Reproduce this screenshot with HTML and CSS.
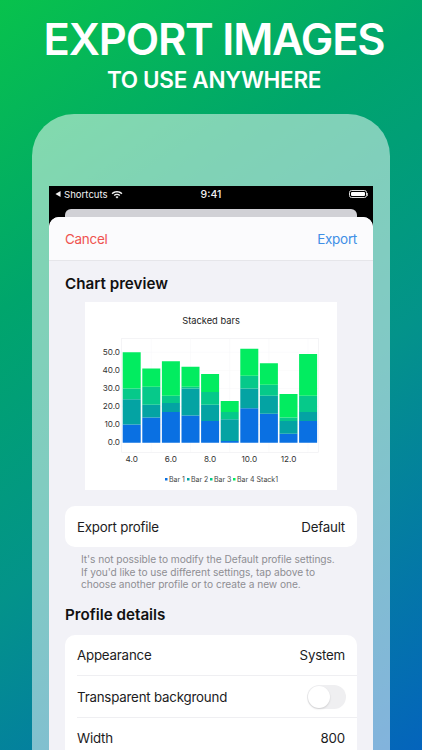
FILE: index.html
```html
<!DOCTYPE html>
<html lang="en">
<head>
<meta charset="utf-8">
<title>Export images</title>
<link rel="stylesheet" href="styles.css">
</head>
<body>
<main class="page">
  <header class="hero">
    <h1 class="hero-title">EXPORT IMAGES</h1>
    <p class="hero-sub">TO USE ANYWHERE</p>
  </header>
  <section class="phone">
    <div class="screen">
      <div class="status">
        <div class="status-left">
          <svg class="back-tri" viewBox="0 0 6 7"><path d="M0 3.5 6 0v7z"/></svg>
          <span>Shortcuts</span>
          <svg class="wifi" viewBox="0 0 12 9"><path d="M6 1C3.9 1 2 1.8.6 3.2l1 1C2.8 3 4.3 2.4 6 2.4s3.2.6 4.4 1.8l1-1C10 1.8 8.1 1 6 1z"/><path d="M6 3.7c-1.300 0-2.400.5-3.300 1.300l1 1C4.300 5.400 5.100 5.100 6 5.100s1.700.3 2.300.9l1-1C8.400 4.200 7.300 3.700 6 3.700z"/><path d="M6 6.300c-.6 0-1.100.2-1.500.6L6 8.500l1.500-1.600c-.4-.4-.9-.6-1.500-.6z"/></svg>
        </div>
        <div class="status-time">9:41</div>
        <div class="status-right">
          <span class="battery"><span class="battery-fill"></span></span>
          <span class="battery-cap"></span>
        </div>
      </div>
      <div class="back-card"></div>
      <div class="sheet">
        <nav class="sheet-nav">
          <span class="cancel">Cancel</span>
          <span class="export">Export</span>
        </nav>
        <div class="sheet-body">
          <h2 class="section-title">Chart preview</h2>
          <figure class="chart">
            <svg class="chart-svg" viewBox="0 0 252 188">
              <rect class="plot" x="36.700" y="36.300" width="196.600" height="114"/>
              <path class="grid" d="M66.300 36.300V150.300M105.500 36.300V150.300M144.700 36.300V150.300M183.900 36.300V150.300M223.100 36.300V150.300M36.700 50.300H233.300M36.700 68.400H233.300M36.700 86.500H233.300M36.700 104.500H233.300M36.700 122.600H233.300"/>
              <path class="s1" d="M37.700 140.700V122.600h18v18.100zM57.300 140.700V115.400h18v25.300zM76.900 140.700V110h18v30.700zM96.500 140.700V113.600h18v27.100zM116.100 140.700V119h18v21.700zM135.700 140.700V138.900h18v1.800zM155.300 140.700V106.300h18v34.400zM174.900 140.700V111.800h18v28.900zM194.500 140.700V131.700h18v9zM214.100 140.700V119h18v21.700z"/>
              <path class="s2" d="M37.700 122.600V97.300h18v25.300zM57.300 115.400V102.700h18v12.700zM76.900 110V100.900h18v9.100zM96.500 113.600V86.500h18v27.100zM116.100 119V102.700h18v16.300zM135.700 138.900V117.200h18v21.700zM155.300 106.300V86.500h18v19.800zM174.900 111.800V93.700h18v18.100zM194.500 131.700V119h18v12.700zM214.100 119V110h18v9z"/>
              <path class="s3" d="M37.700 97.300V86.500h18v10.800zM57.300 102.700V84.700h18v18zM76.900 100.900V93.700h18v7.200zM96.500 86.500V84.700h18v1.800zM116.100 102.700V90.100h18v12.600zM135.700 117.200V110h18v7.200zM155.300 86.500V73.800h18v12.700zM174.900 93.700V82.800h18v10.900zM194.500 119V115.400h18v3.600zM214.100 110V93.700h18v16.300z"/>
              <path class="s4" d="M37.700 86.500V50.300h18v36.200zM57.300 84.700V66.600h18v18.100zM76.900 93.700V59.300h18v34.400zM96.500 84.700V64.800h18v19.900zM116.100 90.100V72h18v18.100zM135.700 110V99.100h18v10.900zM155.300 73.800V46.700h18v27.100zM174.900 82.800V61.200h18v21.600zM194.500 115.400V91.900h18v23.500zM214.100 93.700V52.100h18v41.600z"/>
              <text class="chart-title" x="126" y="22">Stacked bars</text>
              <g class="y-labels">
                <text x="35" y="53.300">50.0</text>
                <text x="35" y="71.300">40.0</text>
                <text x="35" y="89.300">30.0</text>
                <text x="35" y="107">20.0</text>
                <text x="35" y="125">10.0</text>
                <text x="35" y="142.800">0.0</text>
              </g>
              <g class="x-labels">
                <text x="46.700" y="159.600">4.0</text>
                <text x="85.900" y="159.600">6.0</text>
                <text x="125.100" y="159.600">8.0</text>
                <text x="164.300" y="159.600">10.0</text>
                <text x="203.500" y="159.600">12.0</text>
              </g>
              <rect class="s1" x="80" y="176" width="2.500" height="2.500"/>
              <text class="legend" x="84" y="179.500">Bar 1</text>
              <rect class="s2" x="102" y="176" width="2.500" height="2.500"/>
              <text class="legend" x="106" y="179.500">Bar 2</text>
              <rect class="s3" x="125" y="176" width="2.500" height="2.500"/>
              <text class="legend" x="129" y="179.500">Bar 3</text>
              <rect class="s4" x="148" y="176" width="2.500" height="2.500"/>
              <text class="legend" x="152" y="179.500">Bar 4 Stack1</text>
            </svg>
          </figure>
          <div class="card">
            <div class="row"><span>Export profile</span><span>Default</span></div>
          </div>
          <p class="note">It's not possible to modify the Default profile settings.<br>If you'd like to use different settings, tap above to<br>choose another profile or to create a new one.</p>
          <h2 class="section-title details-title">Profile details</h2>
          <div class="card">
            <div class="row row-line"><span>Appearance</span><span>System</span></div>
            <div class="row row-line"><span>Transparent background</span><span class="switch"><span class="knob"></span></span></div>
            <div class="row"><span>Width</span><span>800</span></div>
          </div>
        </div>
      </div>
    </div>
  </section>
</main>
</body>
</html>
```
FILE: styles.css
```css
* { box-sizing: border-box; }
html, body { margin: 0; padding: 0; }
body { width: 422px; height: 750px; overflow: hidden; font-family: Inter, "Liberation Sans", sans-serif; }
.page {
  width: 422px; height: 750px; overflow: hidden;
  background: linear-gradient(146deg, #08c24c 0%, #00a56c 30%, #03938a 58%, #0464bc 100%);
  display: flex; flex-direction: column; align-items: center;
}
.hero { text-align: center; color: #fff; padding: 15px 0 0 6px; height: 114px; flex: none; }
.hero-title { margin: 0; font-size: 43.500px; font-weight: 600; line-height: 49px; letter-spacing: -1.200px; white-space: nowrap; }
.hero-sub { margin: 3px 0 0; font-size: 22.500px; font-weight: 600; line-height: 26px; letter-spacing: -0.300px; white-space: nowrap; }
.phone {
  flex: none; width: 358px; height: 636px; padding: 72px 17px 0;
  background: rgba(255, 255, 255, 0.5);
  border-radius: 42px 42px 0 0;
}
.screen { background: #000; height: 564px; overflow: hidden; }
.status { height: 23px; display: flex; align-items: center; justify-content: space-between; color: #f2f2f2; font-size: 9.600px; padding: 0 5px 7px 6px; position: relative; }
.status-left { display: flex; align-items: center; gap: 3px; }
.back-tri { width: 6px; height: 6px; fill: #f2f2f2; }
.wifi { width: 12px; height: 9px; fill: #f2f2f2; }
.status-time { position: absolute; left: 0; right: 0; text-align: center; font-weight: 500; font-size: 10.500px; }
.status-right { display: flex; align-items: center; }
.battery { width: 18px; height: 8px; border: 1px solid #ddd; border-radius: 2.500px; padding: 1px; display: block; }
.battery-fill { display: block; height: 100%; background: #fff; border-radius: 1px; }
.battery-cap { width: 1px; height: 3px; background: #aaa; }
.back-card { height: 12px; margin: 0 16px -4px; background: #d1d1d6; border-radius: 6px 6px 0 0; }
.sheet { background: #f2f2f7; border-radius: 10px 10px 0 0; height: 533px; overflow: hidden; position: relative; }
.sheet-nav { height: 44px; background: #fbfbfd; border-bottom: 1px solid #e6e6ea; display: flex; align-items: center; justify-content: space-between; padding: 0 16px; font-size: 13.500px; letter-spacing: -0.300px; }
.cancel { color: #ef5350; }
.export { color: #3f8fe6; }
.sheet-body { padding: 0 16px; }
.section-title { margin: 0; font-size: 15.200px; font-weight: 600; line-height: 20px; color: #111; padding-top: 13px; }
.chart { margin: 8px 20px 16px; height: 188px; background: #fff; }
.chart-svg { display: block; width: 252px; height: 188px; font-family: Inter, "Liberation Sans", sans-serif; }
.plot { fill: #fff; stroke: #eeeef2; stroke-width: .7; }
.grid { stroke: #f6f6f8; stroke-width: .5; fill: none; }
.s1 { fill: #0a70e2; }
.s2 { fill: #04a3a3; }
.s3 { fill: #06c98a; }
.s4 { fill: #02ec60; }
.chart-title { font-size: 9.300px; text-anchor: middle; fill: #222; }
.y-labels text { font-size: 8.200px; text-anchor: end; fill: #333; }
.x-labels text { font-size: 8.200px; text-anchor: middle; fill: #333; }
.legend { font-size: 7px; fill: #444; }
.card { background: #fff; border-radius: 10px; padding-left: 12px; }
.row { height: 41.300px; display: flex; align-items: center; justify-content: space-between; padding-right: 12px; font-size: 13.300px; letter-spacing: -0.200px; color: #1c1c1e; }
.row-line { border-bottom: 1px solid #efeff2; }
.note { margin: 6px 16px 0; font-size: 10.200px; line-height: 12.500px; letter-spacing: -0.060px; color: #8e8e93; white-space: nowrap; }
.details-title { padding-top: 14.500px; margin-bottom: 9.800px; }
.switch { width: 39px; height: 24px; margin-right: -1px; border-radius: 12px; background: #efeff1; padding: 1px; display: block; }
.knob { display: block; width: 22px; height: 22px; border-radius: 50%; background: #fff; box-shadow: 0 1px 2px rgba(0,0,0,.14); }
```
